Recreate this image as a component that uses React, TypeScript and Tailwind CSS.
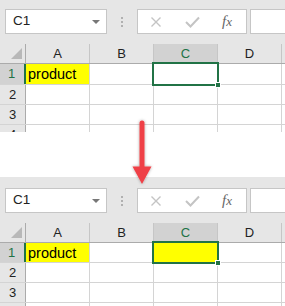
import React from "react";

const COLS = ["A", "B", "C", "D", "E"];

function HeaderRow() {
  return (
    <div className="flex h-[20px] border-b border-[#ababab] bg-[#e6e6e6]">
      <div className="relative w-[26px] shrink-0 border-r border-[#ababab]">
        <svg className="absolute left-0 top-0" width="26" height="19" viewBox="0 0 26 19">
          <polygon points="22,4 22,15 11,15" fill="#b8b8b8" />
        </svg>
      </div>
      {COLS.map((c) => (
        <div
          key={c}
          className={
            c === "C"
              ? "flex w-[64px] shrink-0 items-center justify-center border-r border-[#c6c6c6] bg-[#d2d2d2] text-[13px] text-[#217346]"
              : "flex w-[64px] shrink-0 items-center justify-center border-r border-[#c6c6c6] text-[13px] text-[#222]"
          }
        >
          {c === "E" ? "" : c}
        </div>
      ))}
    </div>
  );
}

function DataRow({ n, h, filled, sel }: { n: number; h: string; filled: boolean; sel: boolean }) {
  return (
    <div className={h + " flex border-b border-[#d4d4d4]"}>
      <div
        className={
          sel
            ? "flex w-[26px] shrink-0 items-center justify-center border-r-2 border-[#217346] bg-[#d2d2d2] pr-[1px] text-[13px] text-[#217346]"
            : "flex w-[26px] shrink-0 items-center justify-center border-r border-[#ababab] bg-[#e6e6e6] text-[13px] text-[#222]"
        }
      >
        {n}
      </div>
      {COLS.map((c) => {
        const isA1 = sel && c === "A";
        const isC1 = sel && c === "C";
        let cls = "relative w-[64px] shrink-0 border-r border-[#d4d4d4] bg-white";
        if (isA1) cls = "relative w-[64px] shrink-0 border-r border-[#d4d4d4] bg-[#ffff00] pl-[2px] text-[14.5px] leading-[20px] text-black";
        if (isC1 && filled) cls = "relative w-[64px] shrink-0 border-r border-[#d4d4d4] bg-[#ffff00]";
        return (
          <div key={c} className={cls}>
            {isA1 ? "product" : null}
            {isC1 ? (
              <>
                <div className="absolute -left-[2px] -top-[2px] -right-[2px] -bottom-[2px] z-10 border-2 border-[#217346]" />
                <div className="absolute -right-[4px] -bottom-[4px] z-20 h-[6px] w-[6px] border border-white bg-[#217346]" />
              </>
            ) : null}
          </div>
        );
      })}
    </div>
  );
}

function Panel({ filled }: { filled: boolean }) {
  return (
    <div
      className={
        filled
          ? "h-[129px] w-[285px] overflow-hidden bg-[#e6e6e6] pt-[11px]"
          : "h-[132px] w-[285px] overflow-hidden bg-[#e6e6e6] pt-[9px]"
      }
    >
      <div className="flex h-[25px] items-stretch pl-[5px]">
        <div className="relative flex w-[102px] shrink-0 items-center border border-[#c6c6c6] bg-white pl-[7px] text-[13.5px] text-[#222]">
          C1
          <svg className="absolute right-[6px] top-[10px]" width="8" height="5" viewBox="0 0 8 5">
            <polygon points="0,0 8,0 4,4" fill="#777" />
          </svg>
        </div>
        <div className="flex w-[30px] shrink-0 flex-col items-center justify-center gap-[2px]">
          <div className="h-[2px] w-[2px] bg-[#b0b0b0]" />
          <div className="h-[2px] w-[2px] bg-[#b0b0b0]" />
          <div className="h-[2px] w-[2px] bg-[#b0b0b0]" />
        </div>
        <div className="flex w-[110px] shrink-0 items-center border border-[#c6c6c6] bg-white">
          <svg className="ml-[12px]" width="12" height="12" viewBox="0 0 12 12">
            <path d="M1.5 1.5 L10.5 10.5 M10.5 1.5 L1.5 10.5" stroke="#c4c4c4" strokeWidth="1.4" fill="none" />
          </svg>
          <svg className="ml-[23px]" width="15" height="12" viewBox="0 0 15 12">
            <path d="M1 6 L5.5 10.5 L14 1.5" stroke="#c4c4c4" strokeWidth="2" fill="none" />
          </svg>
          <span className="ml-[22px] font-['Liberation_Serif',serif] text-[15px] italic text-[#666]">
            f<span className="text-[13px]">x</span>
          </span>
        </div>
        <div className="ml-[3px] w-[60px] shrink-0 border border-[#c6c6c6] bg-white" />
      </div>
      <div className="mt-[10px]">
        <HeaderRow />
        <DataRow n={1} h={filled ? "h-[20px]" : "h-[21px]"} filled={filled} sel={true} />
        <DataRow n={2} h="h-[20px]" filled={filled} sel={false} />
        <DataRow n={3} h="h-[20px]" filled={filled} sel={false} />
        <DataRow n={4} h="h-[20px]" filled={filled} sel={false} />
      </div>
    </div>
  );
}

export default function App() {
  return (
    <div className="relative h-[306px] w-[285px] overflow-hidden bg-white font-['Liberation_Sans',Arial,sans-serif]">
      <Panel filled={false} />
      <div className="h-[45px] bg-white" />
      <Panel filled={true} />
      <svg className="pointer-events-none absolute left-0 top-0 z-30" width="285" height="306" viewBox="0 0 285 306">
        <defs>
          <filter id="sh" x="-50%" y="-20%" width="200%" height="140%">
            <feDropShadow dx="0" dy="0" stdDeviation="1.6" floodColor="#000" floodOpacity="0.35" />
          </filter>
        </defs>
        <g filter="url(#sh)">
          <path d="M142 123 L142 168" stroke="#ef4146" strokeWidth="5" strokeLinecap="round" fill="none" />
          <polygon points="132.5,166.5 151.5,166.5 142,184" fill="#ef4146" />
        </g>
      </svg>
    </div>
  );
}
